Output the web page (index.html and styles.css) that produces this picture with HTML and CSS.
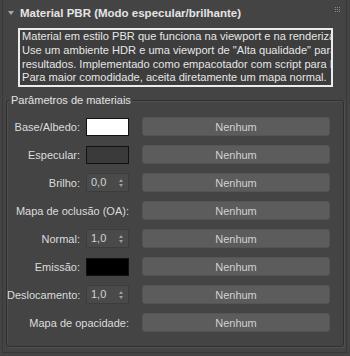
FILE: index.html
```html
<!DOCTYPE html>
<html lang="pt">
<head>
  <meta charset="UTF-8">
  <title>Material PBR</title>
  <link rel="stylesheet" href="styles.css">
</head>
<body>
  <div class="panel">
    <div class="header">
      <span class="arrow"></span>
      <span class="title">Material PBR (Modo especular/brilhante)</span>
      <svg class="grip" width="6" height="6" viewBox="0 0 6 6">
        <rect x="0" y="0" width="1" height="1"/><rect x="2" y="0" width="1" height="1"/><rect x="4" y="0" width="1" height="1"/>
        <rect x="0" y="2" width="1" height="1"/><rect x="2" y="2" width="1" height="1"/><rect x="4" y="2" width="1" height="1"/>
        <rect x="0" y="4" width="1" height="1"/><rect x="2" y="4" width="1" height="1"/><rect x="4" y="4" width="1" height="1"/>
      </svg>
    </div>

    <div class="desc">
      <div>Material em estilo PBR que funciona na viewport e na renderização.</div>
      <div>Use um ambiente HDR e uma viewport de "Alta qualidade" para obter</div>
      <div>resultados. Implementado como empacotador com script para Mental Ray.</div>
      <div>Para maior comodidade, aceita diretamente um mapa normal.</div>
    </div>

    <fieldset class="group">
      <legend>Parâmetros de materiais</legend>
      <div class="rows">
        <span class="lbl">Base/Albedo:</span>
        <span class="swatch white"></span>
        <button class="map">Nenhum</button>

        <span class="lbl">Especular:</span>
        <span class="swatch grey"></span>
        <button class="map">Nenhum</button>

        <span class="lbl">Brilho:</span>
        <span class="spin">0,0<i class="arr"></i></span>
        <button class="map">Nenhum</button>

        <span class="lbl wide">Mapa de oclusão (OA):</span>
        <button class="map">Nenhum</button>

        <span class="lbl">Normal:</span>
        <span class="spin">1,0<i class="arr"></i></span>
        <button class="map">Nenhum</button>

        <span class="lbl">Emissão:</span>
        <span class="swatch black"></span>
        <button class="map">Nenhum</button>

        <span class="lbl">Deslocamento:</span>
        <span class="spin">1,0<i class="arr"></i></span>
        <button class="map">Nenhum</button>

        <span class="lbl wide">Mapa de opacidade:</span>
        <button class="map">Nenhum</button>
      </div>
    </fieldset>
  </div>
</body>
</html>
```

FILE: styles.css
```css
html, body { margin: 0; height: 100%; }
body {
  background: #444444;
  font-family: "Liberation Sans", Arial, sans-serif;
  font-size: 11px;
  color: #dcdcdc;
  padding: 0 3px 3px 2px;
  box-sizing: border-box;
}
.panel {
  height: 100%;
  box-sizing: border-box;
  border: 1px solid #383838;
  border-top: none;
}

.header { height: 26px; display: flex; align-items: center; position: relative; }
.arrow {
  width: 0; height: 0;
  margin-left: 5px; margin-right: 6px;
  border-left: 3px solid transparent;
  border-right: 3px solid transparent;
  border-top: 4px solid #a8a8a8;
}
.title { font-weight: bold; font-size: 11.5px; color: #e4e4e4; }
.grip { position: absolute; right: 5px; top: 7px; fill: #8a8a8a; }

.desc {
  margin: 2px 0 0 15px;
  width: 315px;
  box-sizing: border-box;
  border: 2px solid #ececec;
  background: #3d3d3d;
  padding: 0 2px;
  font-size: 11.1px;
  line-height: 13.75px;
  white-space: nowrap;
  overflow: hidden;
  color: #e6e6e6;
}

.group {
  margin: 6px 2px 0 3px;
  padding: 0 0 14px 0;
  border: 1px solid #303030;
  border-radius: 3px;
  box-shadow: inset 1px 1px 0 #505050, 1px 1px 0 #505050;
}
.group legend { margin-left: 3px; padding: 0 1px; line-height: 14px; color: #e2e2e2; }

.rows {
  display: grid;
  grid-template-columns: 79px 43px 1fr;
  grid-auto-rows: 19px;
  row-gap: 9px;
  padding: 10px 13px 0 0;
  align-items: center;
}
.lbl { text-align: right; padding-right: 6px; white-space: nowrap; }
.lbl.wide { grid-column: 1 / 3; padding-right: 0; }

.swatch { height: 18px; box-sizing: border-box; border: 1px solid #111; }
.swatch.white { background: #ffffff; }
.swatch.grey { background: #3a3a3a; }
.swatch.black { background: #000000; }

.spin {
  height: 19px;
  box-sizing: border-box;
  border: 1px solid #3c3c3c;
  background: #4a4a4a;
  color: #d4d4d4;
  padding-left: 4px;
  line-height: 17px;
  position: relative;
}
.arr {
  position: absolute; right: 5px; top: 5px;
  width: 0; height: 0;
  border-left: 2px solid transparent;
  border-right: 2px solid transparent;
  border-bottom: 3px solid #a0a0a0;
}
.arr::after {
  content: ""; position: absolute; left: -2px; top: 5px;
  border-left: 2px solid transparent;
  border-right: 2px solid transparent;
  border-top: 3px solid #a0a0a0;
}

.map {
  margin-left: 13px;
  height: 19px;
  border: 1px solid #545454;
  border-radius: 3px;
  background: #5c5c5c;
  color: #d2d2d2;
  font: inherit;
  padding: 0;
}
```
